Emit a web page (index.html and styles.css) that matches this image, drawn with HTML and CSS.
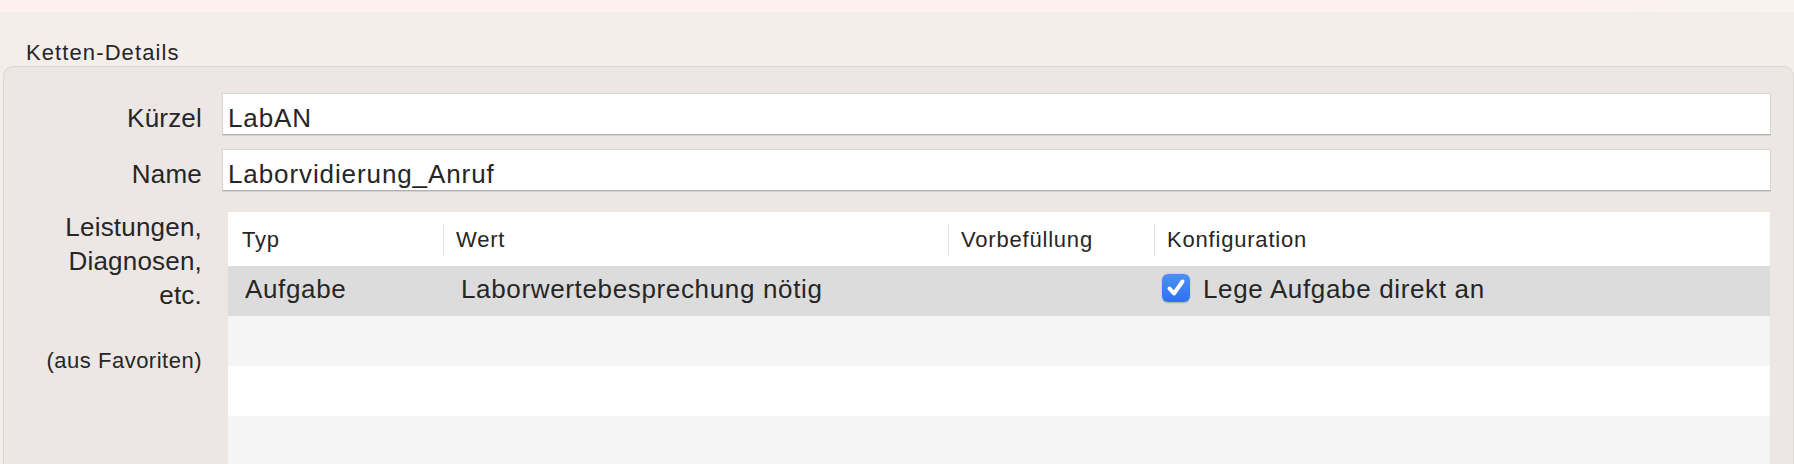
FILE: index.html
```html
<!DOCTYPE html>
<html lang="de">
<head>
    <meta charset="UTF-8">
    <title>Ketten-Details</title>
    <link rel="stylesheet" href="styles.css">
</head>
<body>
    <div class="titlebar"></div>
    <div class="section-title">Ketten-Details</div>

    <div class="group">
        <div class="form">
            <div class="label">Kürzel</div>
            <div class="field">LabAN</div>

            <div class="label">Name</div>
            <div class="field">Laborvidierung_Anruf</div>

            <div class="label multi">
                Leistungen,<br>Diagnosen,<br>etc.
                <div class="hint">(aus Favoriten)</div>
            </div>

            <div class="table">
                <div class="th first"><span>Typ</span></div>
                <div class="th"><span>Wert</span></div>
                <div class="th"><span>Vorbefüllung</span></div>
                <div class="th"><span>Konfiguration</span></div>

                <div class="tr selected">
                    <div class="td first">Aufgabe</div>
                    <div class="td">Laborwertebesprechung nötig</div>
                    <div class="td"></div>
                    <div class="td check-cell">
                        <span class="checkbox">
                            <svg width="28" height="28" viewBox="0 0 28 28">
                                <path d="M7.5 14.5 L12 19.5 L20.5 7.5" fill="none" stroke="#fff" stroke-width="4" stroke-linecap="round" stroke-linejoin="round"/>
                            </svg>
                        </span>
                        Lege Aufgabe direkt an
                    </div>
                </div>

                <div class="tr stripe"></div>
                <div class="tr"></div>
                <div class="tr stripe"></div>
            </div>
        </div>
    </div>
</body>
</html>
```

FILE: styles.css
```css
/* Ketten-Details */
html, body {
    margin: 0;
    height: 100%;
    overflow: hidden;
}

body {
    font-family: "Liberation Sans", Arial, sans-serif;
    background-color: #f3eeea;
    color: #262626;
}

.titlebar {
    height: 12px;
    background: linear-gradient(to right, #fcf1ef 0%, #fcf1ef 88%, #f7f3ee 100%);
}

.section-title {
    margin-top: 28px;
    padding-left: 26px;
    height: 26px;
    line-height: 26px;
    font-size: 22px;
    letter-spacing: 1.1px;
}

.group {
    margin-left: 3px;
    background: #ece7e4;
    border: 1px solid #ddd7d3;
    border-radius: 10px;
    padding: 26px 22px 0 0;
    height: 600px;
}

.form {
    display: grid;
    grid-template-columns: 198px 1fr;
    column-gap: 20px;
    row-gap: 14px;
}

.label {
    text-align: right;
    font-size: 26px;
    line-height: 30px;
    padding-top: 10px;
    letter-spacing: 0.2px;
}

.label.multi {
    padding-top: 0;
    margin-top: 5px;
    line-height: 34px;
}

.hint {
    margin-top: 36px;
    font-size: 22px;
    line-height: 26px;
    letter-spacing: 0.5px;
}

.field {
    box-sizing: border-box;
    height: 42px;
    background: #fff;
    border: 1px solid #d9d5d2;
    border-bottom: 1px solid #b3b0ad;
    box-shadow: 0 1px 0 #d6d1ce;
    padding: 9px 0 0 5px;
    font-size: 26px;
    line-height: 30px;
    letter-spacing: 0.9px;
}

.table {
    margin: 7px 1px 0 6px;
    background: #fff;
    display: grid;
    grid-template-columns: 215px 505px 206px 1fr;
}

.th {
    height: 54px;
    box-sizing: border-box;
    padding: 12px 0 10px;
    font-size: 22px;
    letter-spacing: 0.8px;
}

.th span {
    display: block;
    height: 32px;
    line-height: 32px;
    border-left: 1px solid #e1e1e1;
    padding-left: 12px;
}

.th.first span {
    border-left: none;
    padding-left: 14px;
}

.tr {
    grid-column: 1 / -1;
    display: grid;
    grid-template-columns: 215px 505px 206px 1fr;
    height: 50px;
}

.tr.selected {
    background: #dcdcdc;
}

.tr.stripe {
    background: #f4f5f4;
}

.td {
    font-size: 26px;
    line-height: 47px;
    padding-left: 18px;
    white-space: nowrap;
    letter-spacing: 0.65px;
}

.td.first {
    padding-left: 17px;
}

.check-cell {
    display: flex;
    align-items: flex-start;
    padding-left: 8px;
}

.checkbox {
    width: 28px;
    height: 28px;
    margin: 8px 13px 0 0;
    border-radius: 6px;
    background: linear-gradient(#4b8ff8, #2f72ec);
    box-shadow: 0 0.5px 1.5px rgba(0, 0, 0, 0.25);
    display: block;
}

.checkbox svg {
    display: block;
}
```
